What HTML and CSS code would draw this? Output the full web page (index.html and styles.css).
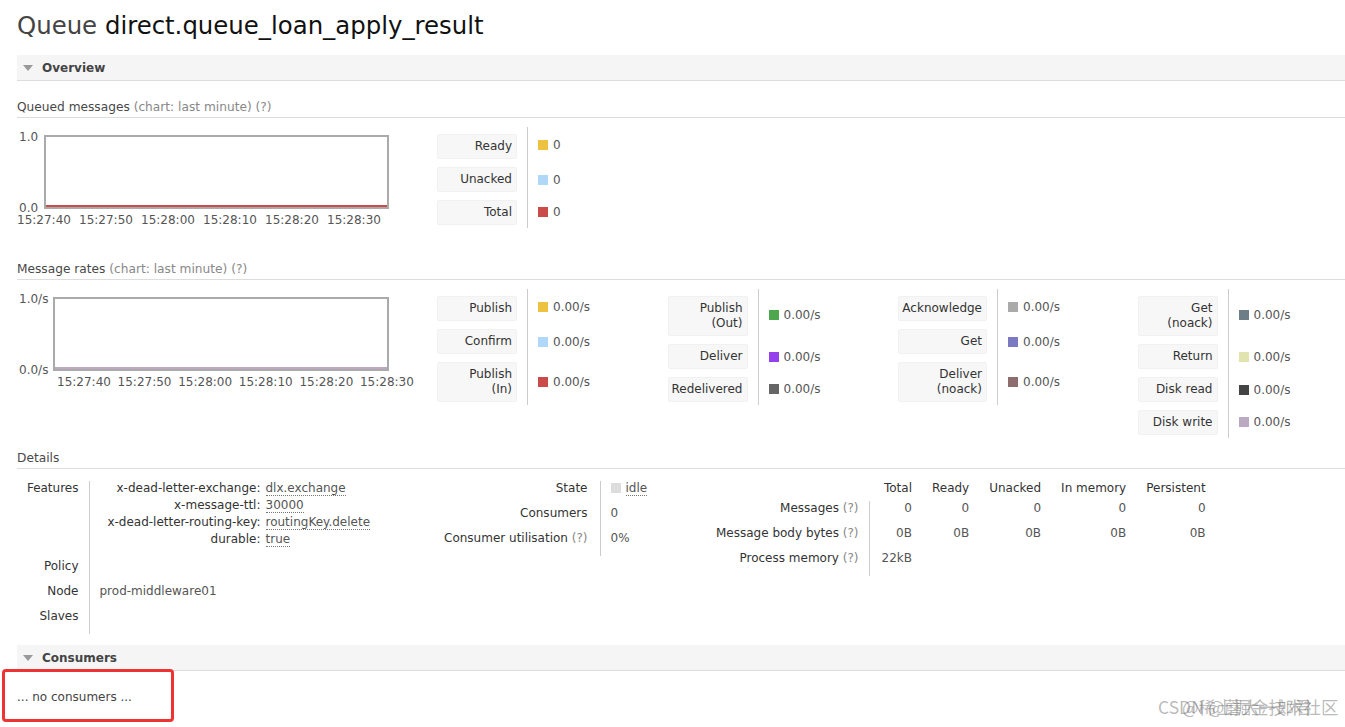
FILE: index.html
```html
<!DOCTYPE html>
<html>
<head>
<meta charset="utf-8">
<link rel="stylesheet" href="styles.css">
</head>
<body>
<div class="page">
  <h1 class="title"><span class="muted">Queue</span> direct.queue_loan_apply_result</h1>

  <div class="section">
    <h2 class="bar"><span class="tri"></span>Overview</h2>
    <div class="section-body">
      <h3 class="sub">Queued messages <span class="help">(chart: last minute) (?)</span></h3>
      <div class="chart-row">
        <div class="chart chart-q">
          <div class="yaxis"><span>1.0</span><span>0.0</span></div>
          <div class="plot"><div class="baseline base-red"></div></div>
          <div class="xaxis"><span>15:27:40</span><span>15:27:50</span><span>15:28:00</span><span>15:28:10</span><span>15:28:20</span><span>15:28:30</span></div>
        </div>
        <table class="legend">
          <tr><th><div class="lbl">Ready</div></th><td><span class="sw c-ready"></span>0</td></tr>
          <tr><th><div class="lbl">Unacked</div></th><td><span class="sw c-unacked"></span>0</td></tr>
          <tr><th><div class="lbl">Total</div></th><td><span class="sw c-total"></span>0</td></tr>
        </table>
      </div>

      <h3 class="sub rates-h">Message rates <span class="help">(chart: last minute) (?)</span></h3>
      <div class="chart-row">
        <div class="chart chart-r">
          <div class="yaxis"><span>1.0/s</span><span>0.0/s</span></div>
          <div class="plot"><div class="baseline base-lilac"></div></div>
          <div class="xaxis"><span>15:27:40</span><span>15:27:50</span><span>15:28:00</span><span>15:28:10</span><span>15:28:20</span><span>15:28:30</span></div>
        </div>
        <table class="legend">
          <tr><th><div class="lbl">Publish</div></th><td><span class="sw c-ready"></span>0.00/s</td></tr>
          <tr><th><div class="lbl">Confirm</div></th><td><span class="sw c-unacked"></span>0.00/s</td></tr>
          <tr><th><div class="lbl">Publish<br>(In)</div></th><td><span class="sw c-total"></span>0.00/s</td></tr>
        </table>
        <table class="legend">
          <tr><th><div class="lbl">Publish<br>(Out)</div></th><td><span class="sw c-green"></span>0.00/s</td></tr>
          <tr><th><div class="lbl">Deliver</div></th><td><span class="sw c-purple"></span>0.00/s</td></tr>
          <tr><th><div class="lbl">Redelivered</div></th><td><span class="sw c-dgray"></span>0.00/s</td></tr>
        </table>
        <table class="legend wide">
          <tr><th><div class="lbl">Acknowledge</div></th><td><span class="sw c-lgray"></span>0.00/s</td></tr>
          <tr><th><div class="lbl">Get</div></th><td><span class="sw c-violet"></span>0.00/s</td></tr>
          <tr><th><div class="lbl">Deliver<br>(noack)</div></th><td><span class="sw c-mauve"></span>0.00/s</td></tr>
        </table>
        <table class="legend">
          <tr><th><div class="lbl">Get<br>(noack)</div></th><td><span class="sw c-slate"></span>0.00/s</td></tr>
          <tr><th><div class="lbl">Return</div></th><td><span class="sw c-khaki"></span>0.00/s</td></tr>
          <tr><th><div class="lbl">Disk read</div></th><td><span class="sw c-char"></span>0.00/s</td></tr>
          <tr><th><div class="lbl">Disk write</div></th><td><span class="sw c-lilac"></span>0.00/s</td></tr>
        </table>
      </div>

      <h3 class="sub details-h">Details</h3>
      <div class="details">
        <table class="facts facts-left">
          <tr>
            <th>Features</th>
            <td>
              <table class="mini">
                <tr><th>x-dead-letter-exchange:</th><td><abbr>dlx.exchange</abbr></td></tr>
                <tr><th>x-message-ttl:</th><td><abbr>30000</abbr></td></tr>
                <tr><th>x-dead-letter-routing-key:</th><td><abbr>routingKey.delete</abbr></td></tr>
                <tr><th>durable:</th><td><abbr>true</abbr></td></tr>
              </table>
            </td>
          </tr>
          <tr><th>Policy</th><td></td></tr>
          <tr><th>Node</th><td>prod-middleware01</td></tr>
          <tr><th>Slaves</th><td></td></tr>
        </table>

        <table class="facts facts-mid">
          <tr><th>State</th><td><span class="state-sw"></span><abbr>idle</abbr></td></tr>
          <tr><th>Consumers</th><td>0</td></tr>
          <tr><th>Consumer utilisation <span class="help">(?)</span></th><td>0%</td></tr>
        </table>

        <table class="facts facts-right">
          <tr class="head"><th></th><td class="h first">Total</td><td class="h">Ready</td><td class="h">Unacked</td><td class="h">In memory</td><td class="h">Persistent</td></tr>
          <tr><th>Messages <span class="help">(?)</span></th><td class="first">0</td><td>0</td><td>0</td><td>0</td><td>0</td></tr>
          <tr><th>Message body bytes <span class="help">(?)</span></th><td class="first">0B</td><td>0B</td><td>0B</td><td>0B</td><td>0B</td></tr>
          <tr><th>Process memory <span class="help">(?)</span></th><td class="first">22kB</td><td></td><td></td><td></td><td></td></tr>
        </table>
      </div>
    </div>
  </div>

  <div class="section">
    <h2 class="bar bar-consumers"><span class="tri"></span>Consumers</h2>
    <div class="section-body">
      <p class="empty">... no consumers ...</p>
    </div>
  </div>

  <div class="highlight"></div>
  <div class="watermark"><span class="wm1">CSDN @蘑大一郎君</span><span class="wm2">@稀土掘金技术社区</span></div>
</div>
</body>
</html>
```

FILE: styles.css
```css
* { box-sizing: border-box; }
html, body { margin: 0; padding: 0; background: #fff; }
body {
  font-family: "DejaVu Sans", Verdana, sans-serif;
  font-size: 12px;
  color: #484848;
  overflow: hidden;
}
.page { position: relative; padding: 0 0 0 17px; height: 727px; overflow: hidden; }

.title {
  margin: 0;
  padding-top: 11px;
  font-size: 24.4px;
  font-weight: normal;
  line-height: 30px;
  color: #111;
}
.title .muted { color: #444; }

.bar {
  margin: 14px 0 0 0;
  height: 26px;
  background: #f5f5f5;
  border-bottom: 1px solid #ddd;
  font-size: 12px;
  font-weight: bold;
  color: #444;
  display: flex;
  align-items: center;
  padding-left: 6px;
}
.tri {
  width: 0; height: 0;
  border-left: 5px solid transparent;
  border-right: 5px solid transparent;
  border-top: 6px solid #999;
  margin-right: 9px;
}

.sub {
  margin: 17px 0 0 0;
  font-size: 12.2px;
  font-weight: normal;
  color: #484848;
  line-height: 18px;
  border-bottom: 1px solid #ddd;
  padding-bottom: 1px;
}
.help { color: #888; }

.chart-row { display: flex; align-items: flex-start; margin-top: 9px; }

.chart {
  width: 420px;
  flex: none;
  display: grid;
  position: relative;
}
.chart-q { grid-template-columns: 27px 345px; grid-template-rows: 74px auto; padding-top: 8px; }
.chart-r { grid-template-columns: 36px 336px; grid-template-rows: 74px auto; padding-top: 8px; }

.yaxis {
  display: flex;
  flex-direction: column;
  justify-content: space-between;
  color: #555;
  line-height: 14px;
  margin-top: -5px;
  margin-bottom: -6px;
  padding-left: 2px;
}
.plot {
  border: 2px solid #aaa;
  position: relative;
  display: flex;
  align-items: flex-end;
}
.baseline { height: 2px; width: 100%; }
.base-red { background: #cb4b4b; }
.base-lilac { background: #bba9c2; }
.xaxis {
  grid-column: 1 / 3;
  display: flex;
  color: #555;
  line-height: 14px;
  margin-top: 4px;
}
.chart-q .xaxis span { width: 62px; flex: none; }
.chart-r .xaxis { padding-left: 40px; }
.chart-r .xaxis span { width: 60.6px; flex: none; }

.legend { border-collapse: collapse; border-spacing: 0; flex: none; }
.legend th { padding: 4px 10px 4px 0; font-weight: normal; }
.legend td {
  width: 140px;
  min-width: 140px;
  border-left: 1px solid #ccc;
  padding-left: 10px;
  color: #555;
  white-space: nowrap;
}
.legend tr:first-child th { padding-top: 7px; }
.legend tr:last-child th { padding-bottom: 3px; }
.lbl {
  width: 80px;
  background: #f7f7f7;
  border: 1px solid #f1f1f1;
  border-radius: 2px;
  text-align: right;
  padding: 4px 4px 4px 0;
  line-height: 15px;
  color: #333;
}
.legend.wide .lbl { width: 89px; }
.sw {
  display: inline-block;
  width: 10px; height: 10px;
  margin-right: 5px;
  vertical-align: -1px;
}
.c-ready { background: #edc240; }
.c-unacked { background: #afd8f8; }
.c-total { background: #cb4b4b; }
.c-green { background: #4da74d; }
.c-purple { background: #9440ed; }
.c-dgray { background: #666; }
.c-lgray { background: #aaa; }
.c-violet { background: #7c79c3; }
.c-mauve { background: #8d6d6d; }
.c-slate { background: #6d7e87; }
.c-khaki { background: #e2e4b0; }
.c-char { background: #444; }
.c-lilac { background: #bba9c2; }

.rates-h { margin-top: 32px; }
.details-h { margin-top: 11px; }
.details { display: flex; align-items: flex-start; margin-top: 12px; }
.facts { border-collapse: collapse; border-spacing: 0; }
.facts > tbody > tr > th, .facts > tr > th {
  font-weight: normal;
  text-align: right;
  vertical-align: top;
  padding: 0 10px 11px 0;
  line-height: 14px;
  color: #333;
  white-space: nowrap;
}
.facts > tbody > tr > td, .facts > tr > td {
  vertical-align: top;
  padding: 0 0 11px 10px;
  line-height: 14px;
  color: #555;
  white-space: nowrap;
}
.facts-left { width: 426px; flex: none; }
.facts-left > tbody > tr > th { width: 72px; }
.facts-left > tbody > tr > td { border-left: 1px solid #ccc; }
.mini { border-collapse: collapse; margin-top: -1px; }
.mini th { font-weight: normal; text-align: right; width: 161px; padding: 0; line-height: 17px; color: #333; white-space: nowrap; }
.mini td { padding: 0 0 0 5px; line-height: 17px; color: #555; }
abbr { text-decoration: none; border-bottom: 1px dotted #777; }

.facts-mid { width: 273px; flex: none; }
.facts-mid > tbody > tr > th { width: 157px; padding-right: 12px; }
.facts-mid > tbody > tr > td { border-left: 1px solid #ccc; }
.state-sw {
  display: inline-block; width: 10px; height: 10px; background: #ddd;
  margin-right: 5px; vertical-align: -1px;
}

.facts-right > tbody > tr > th { padding-right: 10px; }
.facts-right > tbody > tr.head > th, .facts-right > tbody > tr.head > td { padding-bottom: 6px; color: #333; }
.facts-right > tbody > tr > td { text-align: right; padding-left: 20px; }
.facts-right > tbody > tr > td.first { border-left: 1px solid #ccc; padding-left: 12px; }
.facts-right > tbody > tr.head > td.first { border-left: none; }

.bar-consumers { margin-top: 11px; }
.empty { margin: 19px 0 0 0; line-height: 14px; color: #444; }

.highlight {
  position: absolute;
  left: 2px; top: 669px;
  width: 172px; height: 53px;
  border: 3px solid #ee3333;
  border-radius: 4px;
}
.watermark {
  position: absolute;
  left: 1158px; top: 696px;
  font-family: "Noto Sans CJK SC", sans-serif;
  font-size: 17.5px;
  line-height: 22px;
  color: rgba(100,100,100,0.45);
  white-space: nowrap;
}
.watermark .wm2 { position: absolute; left: 24px; top: 0; }
```
